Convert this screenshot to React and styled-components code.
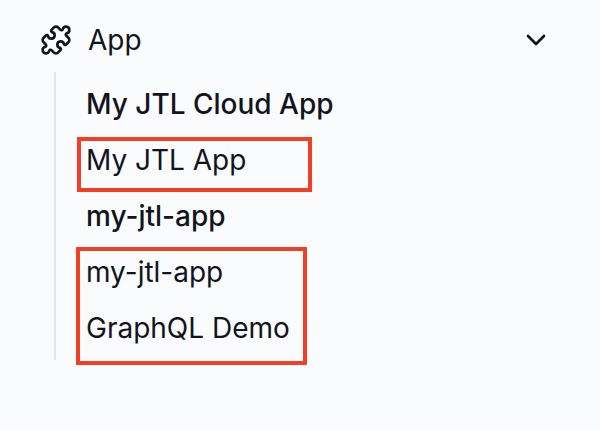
import styled, { createGlobalStyle } from 'styled-components';
import { Puzzle, ChevronDown } from 'lucide-react';

const GlobalStyle = createGlobalStyle`
    * {
        box-sizing: border-box;
    }

    body {
        margin: 0;
        background-color: #fafbfd;
        color: #121420;
        font-family: Inter, sans-serif;
    }
`;
const Sidebar = styled.nav`
    position: relative;
    width: 600px;
    height: 430px;
    padding: 12px 48px 0 40px;
    overflow: hidden;
`;
const GroupHeader = styled.div`
    display: flex;
    align-items: center;
    height: 56px;
    font-size: 28px;
`;
const GroupTitle = styled.span`
    flex: 1;
    margin-left: 16px;
`;
const SubMenu = styled.ul`
    list-style: none;
    margin: 4px 0 0 14px;
    padding: 4px 0 4px 30px;
    height: 288px;
    border-left: solid 2px #e5e6e8;
`;
const SubMenuItem = styled.li`
    height: 56px;
    line-height: 56px;
    font-size: 28px;
    font-weight: ${props => props.$active ? 500 : 400};
    white-space: nowrap;
`;
const Highlight = styled.div`
    position: absolute;
    top: ${props => props.$top}px;
    left: ${props => props.$left}px;
    width: ${props => props.$width}px;
    height: ${props => props.$height}px;
    border: solid 4px #f03f25;
`;

const apps = [
    { id: 1, title: 'My JTL Cloud App', active: true },
    { id: 2, title: 'My JTL App' },
    { id: 3, title: 'my-jtl-app', active: true },
    { id: 4, title: 'my-jtl-app' },
    { id: 5, title: 'GraphQL Demo' },
];

function App() {
    return (
        <Sidebar>
            <GlobalStyle />
            <GroupHeader>
                <Puzzle size={32} strokeWidth={2} />
                <GroupTitle>App</GroupTitle>
                <ChevronDown size={32} strokeWidth={2} />
            </GroupHeader>
            <SubMenu>
                {apps.map(app => (
                    <SubMenuItem key={app.id} $active={app.active}>{app.title}</SubMenuItem>
                ))}
            </SubMenu>
            <Highlight $top={137} $left={77} $width={235} $height={55} />
            <Highlight $top={247} $left={76} $width={231} $height={118} />
        </Sidebar>
    )
}

export default App;
